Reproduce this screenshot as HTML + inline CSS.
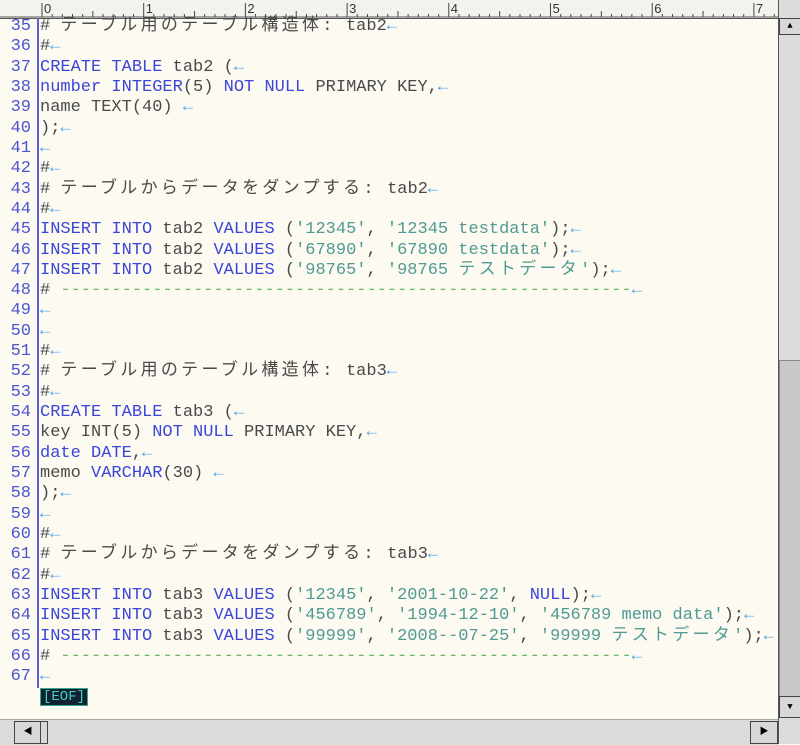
<!DOCTYPE html>
<html><head><meta charset="utf-8"><style>
body{margin:0;width:800px;height:744px;overflow:hidden;background:#fdfaf2;position:relative;font-family:"Liberation Mono","Noto Sans CJK JP",monospace;}
#ruler{position:absolute;left:0;top:0;width:778px;height:18px;background:#f4f2ee;border-bottom:1px solid #555;}
.ln{position:absolute;left:0;width:31px;text-align:right;color:#4a56d0;font-size:17px;line-height:20px;}
.tx{position:absolute;left:40px;white-space:pre;font-size:17px;line-height:20px;color:#4a4a4a;}
.k{color:#3a46d8}.s{color:#4f9a92}.a{color:#4aa2e6}.d{color:#6bb86b}
.j{letter-spacing:3.3px}
#bar{position:absolute;left:37px;top:18px;width:2px;height:670px;background:#5a5fd8;}
#vs{position:absolute;left:778px;top:0;width:22px;height:744px;background:#dcdcdc;border-left:1px solid #555;}
#hs{position:absolute;left:0;top:719px;width:778px;height:25px;background:#dcdcdc;border-top:1px solid #aaa;}
.btn{position:absolute;background:#d8d8d8;border:1px solid #444;}
#eof{position:absolute;left:40px;top:688px;background:#123;color:#3fd0c0;font-size:14px;line-height:16px;padding:0 2px;border:1px solid #3a8;}
</style></head><body>
<div id="ruler"><svg width="778" height="18" id="rs"></svg></div>
<div id="bar"></div>
<div id="lines"></div>
<div id="eof">[EOF]</div>
<div id="vs">
 <div class="btn" style="left:0;top:18px;width:20px;height:15px;font-size:9px;text-align:center;line-height:15px">▲</div>
 <div class="btn" style="left:0;top:360px;width:20px;height:356px;background:#c8c8c8;border-color:#888"></div>
 <div class="btn" style="left:0;top:696px;width:20px;height:20px;font-size:9px;text-align:center;line-height:20px">▼</div>
</div>
<div id="hs">
 <div class="btn" style="left:14px;top:1px;width:26px;height:21px;font-size:9px;text-align:center;line-height:21px">◀</div>
 <div class="btn" style="left:40px;top:1px;width:6px;height:21px"></div>
 <div class="btn" style="left:750px;top:1px;width:26px;height:21px;font-size:9px;text-align:center;line-height:21px">▶</div>
</div>
<script>
var D='# <span class="d">--------------------------------------------------------</span><span class="a">←</span>';
var L=[
'# <span class="j">テーブル用のテーブル構造体:</span> tab2<span class="a">←</span>',
'#<span class="a">←</span>',
'<span class="k">CREATE TABLE</span> tab2 (<span class="a">←</span>',
'<span class="k">number INTEGER</span>(5) <span class="k">NOT NULL</span> PRIMARY KEY,<span class="a">←</span>',
'name TEXT(40) <span class="a">←</span>',
');<span class="a">←</span>',
'<span class="a">←</span>',
'#<span class="a">←</span>',
'# <span class="j">テーブルからデータをダンプする:</span> tab2<span class="a">←</span>',
'#<span class="a">←</span>',
'<span class="k">INSERT INTO</span> tab2 <span class="k">VALUES</span> (<span class="s">\'12345\'</span>, <span class="s">\'12345 testdata\'</span>);<span class="a">←</span>',
'<span class="k">INSERT INTO</span> tab2 <span class="k">VALUES</span> (<span class="s">\'67890\'</span>, <span class="s">\'67890 testdata\'</span>);<span class="a">←</span>',
'<span class="k">INSERT INTO</span> tab2 <span class="k">VALUES</span> (<span class="s">\'98765\'</span>, <span class="s">\'98765 <span class="j">テストデータ</span>\'</span>);<span class="a">←</span>',
D,
'<span class="a">←</span>',
'<span class="a">←</span>',
'#<span class="a">←</span>',
'# <span class="j">テーブル用のテーブル構造体:</span> tab3<span class="a">←</span>',
'#<span class="a">←</span>',
'<span class="k">CREATE TABLE</span> tab3 (<span class="a">←</span>',
'key INT(5) <span class="k">NOT NULL</span> PRIMARY KEY,<span class="a">←</span>',
'<span class="k">date DATE</span>,<span class="a">←</span>',
'memo <span class="k">VARCHAR</span>(30) <span class="a">←</span>',
');<span class="a">←</span>',
'<span class="a">←</span>',
'#<span class="a">←</span>',
'# <span class="j">テーブルからデータをダンプする:</span> tab3<span class="a">←</span>',
'#<span class="a">←</span>',
'<span class="k">INSERT INTO</span> tab3 <span class="k">VALUES</span> (<span class="s">\'12345\'</span>, <span class="s">\'2001-10-22\'</span>, <span class="k">NULL</span>);<span class="a">←</span>',
'<span class="k">INSERT INTO</span> tab3 <span class="k">VALUES</span> (<span class="s">\'456789\'</span>, <span class="s">\'1994-12-10\'</span>, <span class="s">\'456789 memo data\'</span>);<span class="a">←</span>',
'<span class="k">INSERT INTO</span> tab3 <span class="k">VALUES</span> (<span class="s">\'99999\'</span>, <span class="s">\'2008--07-25\'</span>, <span class="s">\'99999 <span class="j">テストデータ</span>\'</span>);<span class="a">←</span>',
D,
'<span class="a">←</span>'];
var h='';
for(var i=0;i<L.length;i++){var t=17+i*20.32;
h+='<div class="ln" style="top:'+t+'px">'+(35+i)+'</div><div class="tx" style="top:'+t+'px">'+L[i]+'</div>';}
document.getElementById('lines').innerHTML=h;
var s='<line x1="0" y1="17" x2="778" y2="17" stroke="#555"/>';
for(var c=0;c<75;c++){var x=42+c*10.17;var hh=(c%10==0)?14:(c%5==0?6:3);
s+='<line x1="'+x+'" y1="'+(17-hh)+'" x2="'+x+'" y2="17" stroke="#444"/>';
if(c%10==0)s+='<text x="'+(x+2)+'" y="13" font-size="13" fill="#333" font-family="Liberation Sans">'+(c/10)+'</text>';}
document.getElementById('rs').innerHTML=s;
</script>
</body></html>
